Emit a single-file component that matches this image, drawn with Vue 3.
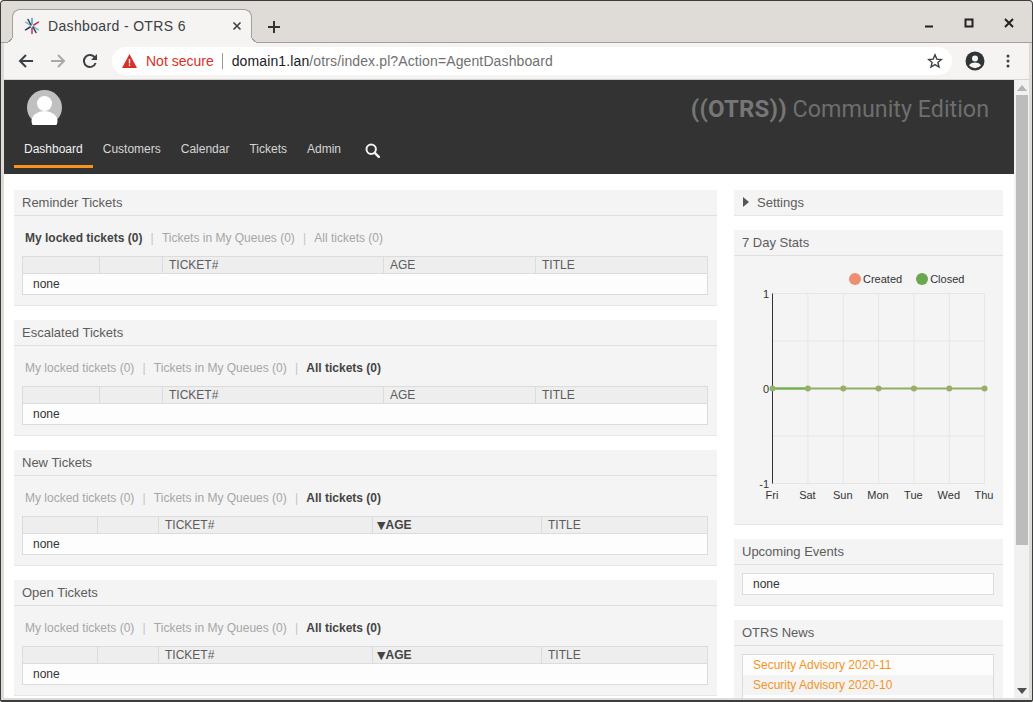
<script setup>
const navItems = ['Dashboard', 'Customers', 'Calendar', 'Tickets', 'Admin'];

const colsWide = [77, 63, 221, 152, 172];
const colsSorted = [75, 61, 214, 169, 166];

const widgets = [
  { title: 'Reminder Tickets', active: 0, cols: colsWide, sorted: false },
  { title: 'Escalated Tickets', active: 2, cols: colsWide, sorted: false },
  { title: 'New Tickets', active: 2, cols: colsSorted, sorted: true },
  { title: 'Open Tickets', active: 2, cols: colsSorted, sorted: true },
];

const filters = ['My locked tickets (0)', 'Tickets in My Queues (0)', 'All tickets (0)'];

const gridX = [772, 807.4, 842.8, 878, 913.4, 948.8, 984].map((x) => x - 734);
const gridY = [0, 47.5, 95, 142.5, 190];
const days = ['Fri', 'Sat', 'Sun', 'Mon', 'Tue', 'Wed', 'Thu'];
const news = ['Security Advisory 2020-11', 'Security Advisory 2020-10'];
</script>

<template>
  <div class="window">
    <div class="tabstrip">
      <div class="tab">
        <svg class="favicon" width="18" height="18" viewBox="0 0 18 18">
          <g fill="none" stroke-width="1.5" stroke-linecap="round">
            <path d="M9 1.5V7" stroke="#4b9cc0" />
            <path d="M9 11v5.5" stroke="#c2334a" />
            <path d="M2.5 5.2 7.2 8" stroke="#7fb9cf" />
            <path d="M10.8 10l4.7 2.8" stroke="#7fb9cf" />
            <path d="M15.5 5.2 10.8 8" stroke="#c2334a" />
            <path d="M7.2 10l-4.7 2.8" stroke="#2b3a55" />
            <path d="M5 2.5 8 8" stroke="#2b3a55" />
            <path d="M10 10l3 5.5" stroke="#2b3a55" />
          </g>
        </svg>
        <span class="tab-title">Dashboard - OTRS 6</span>
        <svg class="tab-close" width="10" height="10" viewBox="0 0 10 10">
          <path d="M1.5 1.5l7 7M8.5 1.5l-7 7" stroke="#3c4043" stroke-width="1.6" />
        </svg>
      </div>
      <svg class="new-tab" width="14" height="14" viewBox="0 0 14 14">
        <path d="M7 1v12M1 7h12" stroke="#333" stroke-width="2" />
      </svg>
      <div class="win-controls">
        <svg width="10" height="10" viewBox="0 0 10 10"><path d="M1 8.5h8" stroke="#222" stroke-width="2" /></svg>
        <svg width="10" height="10" viewBox="0 0 10 10"><rect x="1.5" y="1.5" width="7" height="7" fill="none" stroke="#222" stroke-width="2" /></svg>
        <svg width="10" height="10" viewBox="0 0 10 10"><path d="M1 1l8 8M9 1l-8 8" stroke="#222" stroke-width="2" /></svg>
      </div>
    </div>

    <div class="toolbar">
      <svg class="tool-icon" width="16" height="16" viewBox="0 0 16 16">
        <path d="M15 8H2.5M8 2 2 8l6 6" fill="none" stroke="#3c4043" stroke-width="2" />
      </svg>
      <svg class="tool-icon" width="16" height="16" viewBox="0 0 16 16">
        <path d="M1 8h12.5M8 2l6 6-6 6" fill="none" stroke="#a9a9a9" stroke-width="2" />
      </svg>
      <svg class="tool-icon" width="16" height="16" viewBox="0 0 16 16">
        <path d="M13.6 10a6 6 0 1 1-.6-5.2" fill="none" stroke="#3c4043" stroke-width="2" />
        <path d="M15 1v6H9z" fill="#3c4043" />
      </svg>
      <div class="omnibox">
        <svg width="15" height="14" viewBox="0 0 15 14">
          <path d="M7.5 0 15 14H0z" fill="#d93025" />
          <path d="M6.8 5h1.4v4.6H6.8zM6.8 10.6h1.4V12H6.8z" fill="#fff" />
        </svg>
        <span class="not-secure">Not secure</span>
        <span class="omni-sep"></span>
        <span class="url"><span class="host">domain1.lan</span>/otrs/index.pl?Action=AgentDashboard</span>
        <svg class="star" width="16" height="16" viewBox="0 0 16 16">
          <path d="M8 1.8l1.8 4.3 4.6.4-3.5 3 1.1 4.5L8 11.6l-4 2.4 1.1-4.5-3.5-3 4.6-.4z" fill="none" stroke="#3c4043" stroke-width="1.4" />
        </svg>
      </div>
      <svg class="account" width="20" height="20" viewBox="0 0 20 20">
        <circle cx="10" cy="10" r="9.5" fill="#2f3437" />
        <circle cx="10" cy="7.5" r="3" fill="#f5f4f2" />
        <path d="M4 14.2c1.4-2 3.8-2.7 6-2.7s4.6.7 6 2.7a7.6 7.6 0 0 1-12 0z" fill="#f5f4f2" />
      </svg>
      <svg class="menu" width="4" height="14" viewBox="0 0 4 14">
        <circle cx="2" cy="2" r="1.5" fill="#3c4043" />
        <circle cx="2" cy="7" r="1.5" fill="#3c4043" />
        <circle cx="2" cy="12" r="1.5" fill="#3c4043" />
      </svg>
    </div>

    <div class="viewport">
      <div class="page">
        <header class="header">
          <div class="header-top">
            <div class="avatar">
              <svg width="35" height="35" viewBox="0 0 35 35">
                <circle cx="17.5" cy="17.5" r="17.5" fill="#c0c0c0" />
                <circle cx="17.5" cy="13.5" r="7.5" fill="#fff" />
                <ellipse cx="17.5" cy="31" rx="13" ry="10" fill="#fff" />
              </svg>
            </div>
            <div class="brand"><b>((OTRS))</b> Community Edition</div>
          </div>
          <nav class="nav">
            <a v-for="(item, i) in navItems" :key="item" class="nav-item" :class="{ current: i === 0 }">{{ item }}</a>
            <svg class="search" width="15" height="15" viewBox="0 0 15 15">
              <circle cx="6.2" cy="6.2" r="4.7" fill="none" stroke="#f2f2f2" stroke-width="2" />
              <path d="M9.8 9.8l4 4" stroke="#f2f2f2" stroke-width="2.4" stroke-linecap="round" />
            </svg>
          </nav>
        </header>

        <div class="content">
          <main class="main">
            <section v-for="w in widgets" :key="w.title" class="widget">
              <h2 class="widget-title">{{ w.title }}</h2>
              <div class="filters">
                <template v-for="(f, i) in filters" :key="f">
                  <span v-if="i > 0" class="filter-sep">|</span>
                  <span class="filter" :class="{ active: i === w.active }">{{ f }}</span>
                </template>
              </div>
              <table class="tickets">
                <colgroup>
                  <col v-for="(c, i) in w.cols" :key="i" :style="{ width: c + 'px' }" />
                </colgroup>
                <thead>
                  <tr>
                    <th></th>
                    <th></th>
                    <th>TICKET#</th>
                    <th :class="{ sorted: w.sorted }"><span v-if="w.sorted" class="arrow">▼</span>AGE</th>
                    <th>TITLE</th>
                  </tr>
                </thead>
                <tbody>
                  <tr>
                    <td colspan="5">none</td>
                  </tr>
                </tbody>
              </table>
            </section>
          </main>

          <aside class="side">
            <section class="widget">
              <h2 class="widget-title settings-title"><span class="caret"></span>Settings</h2>
            </section>

            <section class="widget stats">
              <h2 class="widget-title">7 Day Stats</h2>
              <div class="legend">
                <span class="legend-item"><i class="dot created"></i>Created</span>
                <span class="legend-item"><i class="dot closed"></i>Closed</span>
              </div>
              <div class="chart">
                <span class="y-label y-top">1</span>
                <span class="y-label y-mid">0</span>
                <span class="y-label y-bottom">-1</span>
                <svg class="plot" width="269" height="192" viewBox="0 0 269 192">
                  <g transform="translate(0.5 0.5)">
                    <path v-for="x in gridX" :key="x" :d="`M${x} 0V190`" stroke="#e6e6e6" fill="none" />
                    <path v-for="y in gridY" :key="y" :d="`M${gridX[0]} ${y}H${gridX[6]}`" stroke="#e6e6e6" fill="none" />
                    <path :d="`M${gridX[0]} 0V190`" stroke="#333" fill="none" />
                    <path :d="`M${gridX[0]} 95H${gridX[6]}`" stroke="#8fae68" stroke-width="2" fill="none" />
                    <path :d="`M${gridX[0]} 95H${gridX[1]}`" stroke="#70b050" stroke-width="2" fill="none" />
                    <circle v-for="x in gridX" :key="x" :cx="x" cy="95" r="3" fill="#9aae6a" />
                  </g>
                </svg>
                <div class="x-labels">
                  <span v-for="(d, i) in days" :key="d" :style="{ left: gridX[i] - 20 + 'px' }">{{ d }}</span>
                </div>
              </div>
            </section>

            <section class="widget">
              <h2 class="widget-title">Upcoming Events</h2>
              <div class="side-box">none</div>
            </section>

            <section class="widget">
              <h2 class="widget-title">OTRS News</h2>
              <ul class="news">
                <li v-for="n in news" :key="n">{{ n }}</li>
                <li></li>
              </ul>
            </section>
          </aside>
        </div>
      </div>

      <div class="scrollbar">
        <svg class="scroll-arrow" width="10" height="6" viewBox="0 0 10 6"><path d="M5 0l5 6H0z" fill="#b4b4b4" /></svg>
        <div class="thumb"></div>
        <svg class="scroll-arrow bottom" width="10" height="6" viewBox="0 0 10 6"><path d="M0 0h10L5 6z" fill="#505050" /></svg>
      </div>
    </div>
  </div>
</template>

<style>
html,
body {
  margin: 0;
  overflow: hidden;
  background: #fff;
}
</style>

<style scoped>
* {
  box-sizing: border-box;
}

.window {
  width: 1033px;
  height: 702px;
  display: flex;
  flex-direction: column;
  background: #dfdcd8;
  border: 1px solid #3d3d3d;
  border-bottom-width: 2px;
  border-radius: 4px 4px 2px 2px;
  font-family: "Liberation Sans", Arial, sans-serif;
  overflow: hidden;
}

.tabstrip {
  height: 42px;
  flex: none;
  display: flex;
  align-items: flex-end;
  padding-left: 11px;
  border-bottom: 1px solid #a3a19d;
}

.tab {
  position: relative;
  width: 240px;
  height: 34px;
  margin-bottom: -1px;
  display: flex;
  align-items: center;
  padding: 0 9px 1px 10px;
  background: #f5f4f2;
  border: 1px solid #a3a19d;
  border-bottom: none;
  border-radius: 8px 8px 0 0;
}

.tab::before,
.tab::after {
  content: "";
  position: absolute;
  bottom: 0;
  width: 8px;
  height: 8px;
}

.tab::before {
  left: -8px;
  background: radial-gradient(circle at 0 0, transparent 7px, #a3a19d 7px, #a3a19d 8px, #f5f4f2 8px);
}

.tab::after {
  right: -8px;
  background: radial-gradient(circle at 100% 0, transparent 7px, #a3a19d 7px, #a3a19d 8px, #f5f4f2 8px);
}

.favicon {
  flex: none;
}

.tab-title {
  margin-left: 7px;
  font-size: 14px;
  letter-spacing: 0.35px;
  color: #3c4043;
  flex: 1;
}

.new-tab {
  margin: 0 0 8px 15px;
}

.win-controls {
  margin-left: auto;
  padding-right: 18px;
  display: flex;
  gap: 30px;
  align-self: flex-start;
  padding-top: 17px;
}

.toolbar {
  height: 37px;
  flex: none;
  margin: 0 3px;
  padding: 0 14px;
  display: flex;
  align-items: center;
  background: #f5f4f2;
  border-bottom: 1px solid #d6d4d0;
}

.tool-icon {
  margin-right: 16px;
}

.omnibox {
  width: 840px;
  height: 28px;
  margin-left: -2px;
  padding: 0 9px 0 10px;
  display: flex;
  align-items: center;
  background: #fff;
  border-radius: 14px;
  font-size: 14px;
}

.not-secure {
  margin-left: 9px;
  color: #d93025;
}

.omni-sep {
  width: 1px;
  height: 16px;
  margin: 0 9px 0 8px;
  background: #9a9a9a;
}

.url {
  color: #707070;
  letter-spacing: 0.12px;
  flex: 1;
}

.host {
  color: #202124;
}

.account {
  margin-left: 13px;
}

.menu {
  margin-left: 21px;
}

.viewport {
  flex: 1;
  min-height: 0;
  margin: 0 3px 2px;
  display: flex;
}

.page {
  width: 1010px;
  flex: none;
  overflow: hidden;
  background: #fff;
}

.header {
  height: 94px;
  background: #333;
}

.header-top {
  height: 55px;
  padding: 10px 25px 0 23px;
  display: flex;
  justify-content: space-between;
}

.avatar {
  height: 35px;
}

.brand {
  margin-top: 5px;
  font-family: Roboto, "Liberation Sans", sans-serif;
  font-size: 23.3px;
  line-height: 28px;
  color: #6e6e6e;
  white-space: nowrap;
}

.brand b {
  font-size: 24px;
  letter-spacing: 0.2px;
  color: #767676;
}

.nav {
  height: 39px;
  padding-left: 10px;
  display: flex;
  align-items: flex-start;
}

.nav-item {
  height: 33px;
  padding: 7px 10px 0;
  font-size: 12px;
  color: #d6d6d6;
  border-bottom: 3px solid transparent;
}

.nav-item.current {
  color: #f2f2f2;
  border-bottom-color: #f7931e;
}

.search {
  margin: 8px 0 0 14px;
}

.content {
  padding: 16px 11px 0 10px;
  display: flex;
  justify-content: space-between;
}

.main {
  width: 703px;
}

.side {
  width: 269px;
}

.widget {
  margin-bottom: 14px;
  background: #f4f4f4;
  border-bottom: 1px solid #e6e6e6;
}

.widget-title {
  height: 26px;
  margin: 0;
  padding: 5px 8px 0;
  font-size: 13px;
  font-weight: normal;
  line-height: 15px;
  color: #5c5c5c;
  border-bottom: 1px solid #e0e0e0;
}

.filters {
  height: 40px;
  padding: 15px 11px 0;
  font-size: 12px;
  line-height: 14px;
  color: #a6a6a6;
  white-space: nowrap;
}

.filter.active {
  font-weight: bold;
  color: #444;
}

.filter-sep {
  margin: 0 8.2px;
  color: #c4c4c4;
}

.tickets {
  width: 686px;
  margin: 0 8px 10px;
  table-layout: fixed;
  border-collapse: collapse;
  font-size: 12px;
}

.tickets th {
  height: 17px;
  padding: 0 6px;
  line-height: 14px;
  font-weight: normal;
  text-align: left;
  color: #5c5c5c;
  background: #eee;
  border: 1px solid #dcdcdc;
}

.tickets th.sorted {
  padding-left: 4px;
  font-weight: bold;
  color: #444;
}

.arrow {
  font-family: "DejaVu Sans", sans-serif;
  font-size: 11px;
}

.tickets td {
  height: 21px;
  padding: 0 10px;
  color: #333;
  background: #fdfdfd;
  border: 1px solid #dcdcdc;
}

.settings-title {
  display: flex;
  height: 25px;
  border-bottom: none;
  padding-left: 9px;
}

.caret {
  width: 0;
  height: 0;
  margin: 2px 8px 0 0;
  border-left: 6px solid #555;
  border-top: 5px solid transparent;
  border-bottom: 5px solid transparent;
}

.stats {
  height: 295px;
}

.legend {
  height: 36px;
  padding: 10px 0 0 115px;
  display: flex;
  gap: 14px;
  font-size: 11px;
  line-height: 14px;
  color: #333;
}

.legend-item {
  display: flex;
  align-items: center;
  gap: 2px;
}

.dot {
  width: 12px;
  height: 12px;
  border-radius: 50%;
}

.dot.created {
  background: #ee8e72;
}

.dot.closed {
  background: #6aa84f;
}

.chart {
  position: relative;
  height: 220px;
}

.plot {
  display: block;
  margin-top: 1px;
}

.y-label {
  position: absolute;
  right: calc(100% - 35px);
  font-size: 11px;
  line-height: 12px;
  color: #333;
}

.y-top {
  top: -5px;
}

.y-mid {
  top: 90px;
}

.y-bottom {
  top: 185px;
}

.x-labels {
  position: relative;
  height: 14px;
  margin-top: 3px;
  font-size: 11px;
  line-height: 14px;
  color: #333;
}

.x-labels span {
  position: absolute;
  width: 40px;
  text-align: center;
}

.side-box {
  height: 22px;
  margin: 8px 9px 10px 8px;
  padding: 0 10px;
  font-size: 12px;
  line-height: 20px;
  color: #333;
  background: #fdfdfd;
  border: 1px solid #dcdcdc;
}

.news {
  margin: 8px 9px 10px 8px;
  padding: 0;
  list-style: none;
  border: 1px solid #dcdcdc;
  font-size: 12px;
}

.news li {
  height: 20px;
  padding: 0 10px;
  line-height: 20px;
  color: #f7931e;
  background: #fdfdfd;
}

.news li:nth-child(even) {
  background: #f4f4f4;
}

.scrollbar {
  flex: 1;
  position: relative;
  background: #f1f1f1;
}

.scroll-arrow {
  position: absolute;
  left: 3px;
  top: 5px;
}

.scroll-arrow.bottom {
  top: auto;
  bottom: 4px;
}

.thumb {
  position: absolute;
  top: 15px;
  left: 2px;
  width: 12px;
  height: 450px;
  background: #bcbcbc;
}
</style>
